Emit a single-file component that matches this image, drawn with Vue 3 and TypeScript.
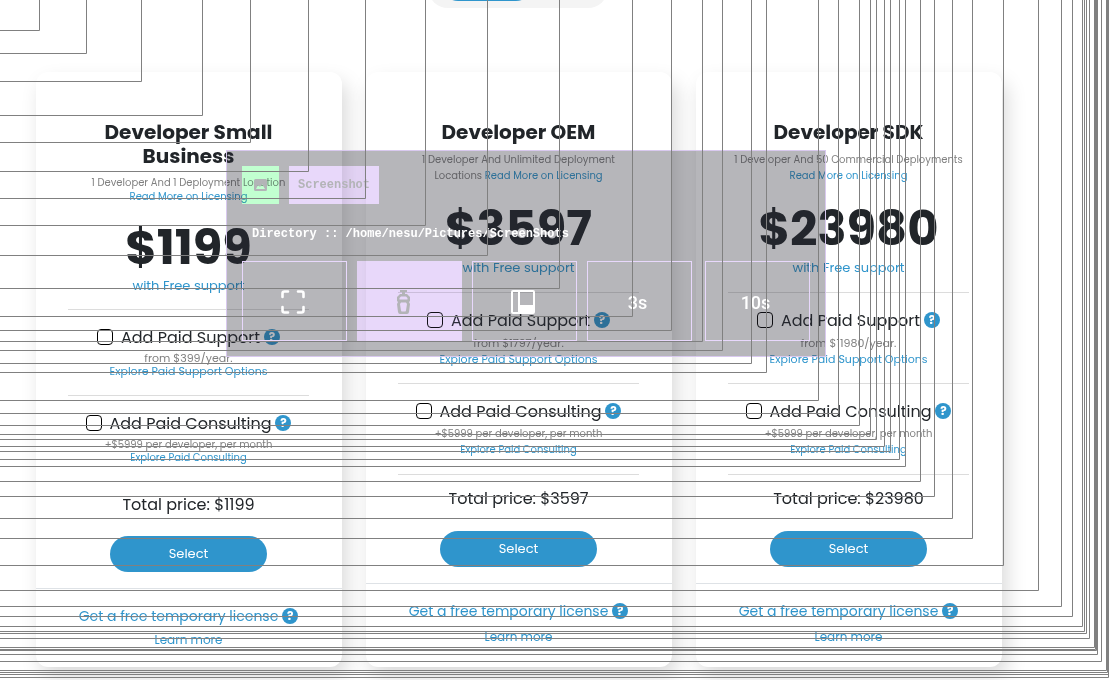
<script setup lang="ts">
interface Plan {
  name: string
  note: string
  brk: boolean
  price: number
  support: string
  tall: boolean
}

const plans: Plan[] = [
  { name: 'Developer Small Business', note: '1 Developer And 1 Deployment Location', brk: true, price: 1199, support: '$399', tall: true },
  { name: 'Developer OEM', note: '1 Developer And Unlimited Deployment Locations', brk: false, price: 3597, support: '$1797', tall: false },
  { name: 'Developer SDK', note: '1 Developer And 50 Commercial Deployments', brk: true, price: 23980, support: '$11980', tall: false },
]

// Bottom-right corners of the selection outlines, all anchored to the top left.
const corners: [number, number][] = [
  [39, 30], [86, 53], [141, 81], [202, 115], [250, 142], [308, 171], [365, 198],
  [425, 225], [487, 255], [559, 288], [632, 316], [671, 330], [702, 341], [722, 350],
  [751, 363], [766, 372], [818, 400], [838, 413], [859, 425], [870, 434], [876, 439],
  [884, 446], [890, 451], [899, 459], [905, 466], [920, 481], [934, 496], [952, 518],
  [972, 538], [1003, 565], [1038, 590], [1061, 606], [1072, 616], [1082, 626],
  [1084, 631], [1086, 633], [1089, 638], [1094, 647], [1095, 649], [1096, 650],
  [1097, 654], [1101, 661], [1106, 670], [1107, 672], [1108, 674], [1108, 677],
]
const outlines = corners.map(([x, y]) => `M0 ${y + 0.5}H${x + 0.5}V0`).join('')
</script>

<template>
  <main class="page">
    <div class="toggle"><span class="toggle-on"></span></div>
    <div class="plans">
      <section v-for="(p, i) in plans" :key="p.name" class="card" :class="{ tall: p.tall }">
        <div class="body">
          <h2>{{ p.name }}</h2>
          <p class="note">{{ p.note }}<br v-if="p.brk"> <a href="#">Read More on Licensing</a></p>
          <div class="price">${{ p.price }}</div>
          <a class="free" href="#">with Free support</a>
          <div class="option support">
            <div class="pick">
              <input :id="'support' + i" type="checkbox"><label :for="'support' + i">Add Paid Support</label>
              <button class="help" type="button">?</button>
            </div>
            <p class="small">from {{ p.support }}/year.<br><a href="#">Explore Paid Support Options</a></p>
          </div>
          <div class="option consulting">
            <div class="pick">
              <input :id="'consulting' + i" type="checkbox"><label :for="'consulting' + i">Add Paid Consulting</label>
              <button class="help" type="button">?</button>
            </div>
            <p class="small">+$5999 per developer, per month<br><a href="#">Explore Paid Consulting</a></p>
          </div>
          <div class="total">Total price: ${{ p.price }}</div>
          <button class="select" type="button">Select</button>
        </div>
        <footer>
          <div class="trial"><a href="#">Get a free temporary license</a><button class="help" type="button">?</button></div>
          <a class="learn" href="#">Learn more</a>
        </footer>
      </section>
    </div>

    <aside class="panel">
      <div class="head">
        <span class="badge tint green">
          <svg width="13" height="12" viewBox="0 0 13 12"><path fill="#b3b4b7" fill-rule="evenodd" d="M1.500 0h10A1.500 1.500 0 0 1 13 1.500v9a1.500 1.500 0 0 1-1.500 1.500h-10A1.500 1.500 0 0 1 0 10.500v-9A1.500 1.500 0 0 1 1.500 0zM2 10h9L8 5 6 8 4 6z" /></svg>
        </span>
        <span class="title tint"><span>Screenshot</span></span>
      </div>
      <p class="dir">Directory :: /home/nesu/Pictures/ScreenShots</p>
      <div class="tiles">
        <button type="button" aria-label="Full screen">
          <svg width="24" height="24" viewBox="0 0 24 24" fill="none" stroke="#fff" stroke-width="2.600" stroke-linecap="round"><path d="M1.500 7V3.500q0-2 2-2H7M17 1.500h3.500q2 0 2 2V7M22.500 17v3.500q0 2-2 2H17M7 22.500H3.500q-2 0-2-2V17" /></svg>
        </button>
        <button type="button" class="tint" aria-label="Selection">
          <svg width="24" height="24" viewBox="0 0 24 24"><path fill="#b3b4b7" fill-rule="evenodd" d="M4 0h7v2H9v2h2l3 3v4l-1 1 1 2-1 8q-.3 2-2 2H4q-1.700 0-2-2l-1-8 1-2-1-1V7l3-3h2V2H4zM5 6.500L3.500 8v1.500h8V8L10 6.500zM5 12.500L4 14l1 6.500.5 1h4l.5-1L11 14l-1-1.500z" /></svg>
        </button>
        <button type="button" aria-label="Window">
          <svg width="24" height="24" viewBox="0 0 24 24"><path fill="#fff" fill-rule="evenodd" d="M2 0h20a2 2 0 0 1 2 2v20a2 2 0 0 1-2 2H2a2 2 0 0 1-2-2V2a2 2 0 0 1 2-2zM2 2v20h5V2zM9 2v13h13V2z" /></svg>
        </button>
        <button type="button">3s</button>
        <button type="button">10s</button>
      </div>
    </aside>
    <svg class="trails" aria-hidden="true"><path :d="outlines" fill="none" stroke="#808080" /></svg>
  </main>
</template>

<style>
body { background: #fff; overflow: hidden; }
</style>

<style scoped>
* { box-sizing: border-box; }
.page { position: relative; min-height: 100vh; overflow: hidden; color: #212529; font-family: Poppins, "Open Sans", sans-serif; }
a { color: #2f95cc; text-decoration: none; }
h2, p { margin: 0; }
button { font: inherit; border: 0; padding: 0; }
.toggle { width: 180px; height: 40px; margin: -32px 0 64px 428px; padding: 0 0 7px 14px; border-radius: 20px; background: #f4f4f4; }
.toggle-on { display: block; width: 90px; height: 33px; border-radius: 16px; background: #2f95cc; }
.plans { display: grid; grid-template-columns: repeat(3, 1fr); gap: 24px; margin: 0 107px 0 36px; }
.card { background: #fff; min-height: 595px; border-radius: 12px; box-shadow: 5px 10px 20px rgba(0, 0, 0, .15); text-align: center; }
.body { display: flex; flex-direction: column; align-items: center; padding: 48px 33px 0 32px; height: 512px; border-bottom: 1px solid #dee2e6; }
.tall .body { height: 517px; }
h2 { font-size: 20px; line-height: 24px; font-weight: 700; width: 210px; }
.note { margin-top: 8px; width: 240px; font-size: 10px; line-height: 16px; color: #808080; white-space: nowrap; }
.card:nth-child(2) .note { white-space: normal; width: 200px; }
.tall .note { line-height: 14px; }
.price { margin-top: 16px; font-size: 48px; line-height: 58px; font-weight: 700; }
.tall .price { line-height: 56px; }
.free { font-size: 13px; line-height: 20px; }
.option { width: 100%; height: 91px; padding-top: 15px; border-top: 1px solid #dcdcdc; }
.support { margin-top: 14px; }
.consulting { border-bottom: 1px solid #dcdcdc; height: 92px; }
.tall .option { height: 86px; }
.tall .support { margin-top: 13px; }
.tall .consulting { border-bottom: 0; }
.pick { display: flex; align-items: center; justify-content: center; height: 24px; font-size: 16px; white-space: nowrap; }
.pick input { appearance: none; flex: none; width: 16px; height: 16px; margin: 0 8px 0 0; border: 1px solid #000; border-radius: 4px; }
.help { flex: none; width: 16px; height: 16px; margin-left: 4px; border-radius: 50%; background: #2f95cc; color: #fff; font-size: 12px; line-height: 16px; font-weight: 700; }
.small { margin-top: 3px; font-size: 10px; line-height: 16px; color: #808080; }
.support .small { font-size: 11px; }
.tall .small { line-height: 13px; }
.total { margin-top: 12px; font-size: 16px; line-height: 24px; }
.select { width: 157px; height: 36px; margin-top: 20px; border-radius: 18px; background: #2f95cc; color: #fff; font-size: 13px; }
.tall .select { margin-top: 19px; }
footer { padding: 15px 1px 0 0; }
.trial { display: flex; align-items: center; justify-content: center; height: 24px; font-size: 14px; white-space: nowrap; }
.learn { display: block; font-size: 12px; line-height: 24px; margin-top: 2px; }
.tall .learn { margin-top: 0; }
.panel { position: absolute; left: 226px; top: 150px; width: 600px; height: 207px; padding: 15px; border: 1px solid #d9c9ef; background: rgba(40, 42, 54, .34); color: #fff; font-family: "Liberation Mono", monospace; font-weight: 700; }
.head { display: flex; gap: 10px; height: 38px; }
.tint { position: relative; }
.tint::before { content: ""; position: absolute; inset: 0; background: #372841; mix-blend-mode: color-dodge; }
.green::before { background: #0f491b; }
.tint > * { position: relative; }
.badge { display: flex; align-items: center; justify-content: center; width: 37px; }
.title { width: 90px; color: #b3b4b7; font-size: 12px; line-height: 38px; text-align: center; }
.dir { margin: 21px 0 17px 10px; font-size: 12px; line-height: 19px; white-space: nowrap; }
.tiles { display: flex; gap: 10px; height: 80px; }
.tiles button { display: flex; align-items: center; justify-content: center; width: 105px; padding: 2px 4px 0 0; border: 1px solid #e8d8fc; background: transparent; color: #fff; font-family: Roboto, sans-serif; font-size: 18px; font-weight: 500; }
.tiles .tint { border: 0; }
.tiles button:last-child { margin-left: auto; }
.trails { position: absolute; left: 0; top: 0; width: 100%; height: 100%; pointer-events: none; }
</style>
